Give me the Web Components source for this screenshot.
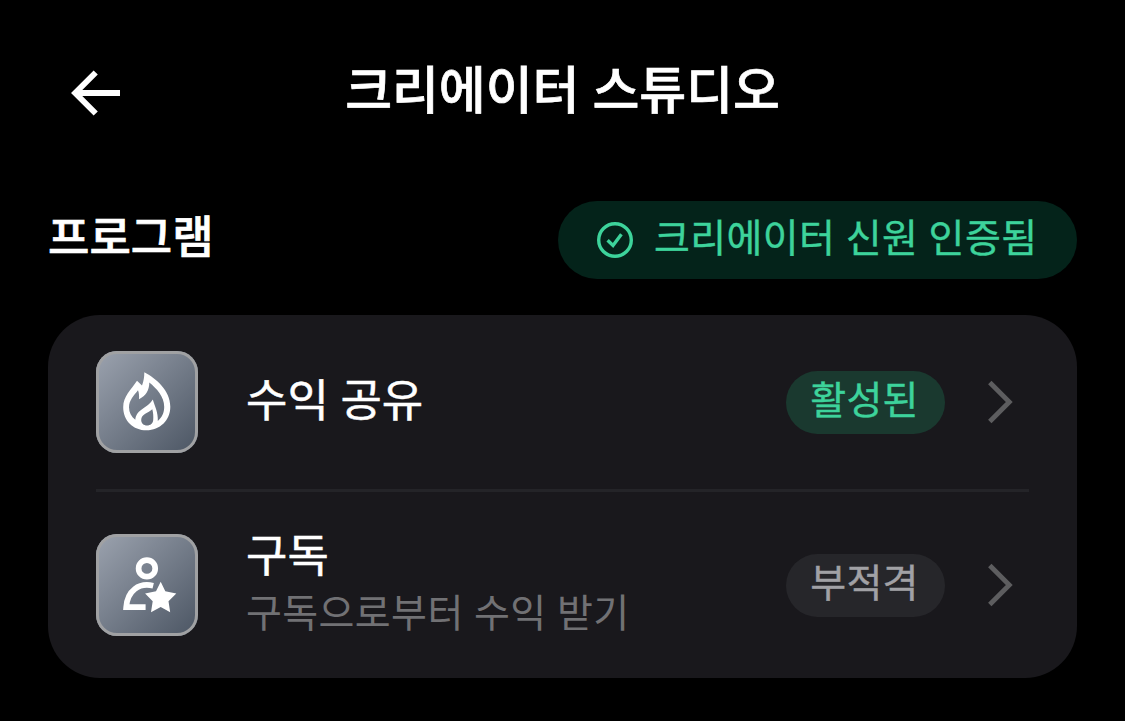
<!DOCTYPE html>
<html lang="ko">
<head>
<meta charset="utf-8">
<title>크리에이터 스튜디오</title>
<style>
	body {
		margin: 0;
		background: #000;
		color: #fff;
		font-family: "Noto Sans CJK KR", sans-serif;
	}
</style>
</head>
<body>
<studio-page>
	<page-header slot="header">크리에이터 스튜디오</page-header>
	<section-header slot="heading">
		프로그램
		<verified-badge slot="badge">크리에이터 신원 인증됨</verified-badge>
	</section-header>
	<program-card>
		<program-row>
			<program-icon slot="icon" name="flame"></program-icon>
			<span slot="name">수익 공유</span>
			<status-pill slot="status" active>활성된</status-pill>
		</program-row>
		<program-row class="tall">
			<program-icon slot="icon" name="subscriber"></program-icon>
			<span slot="name">구독</span>
			<span slot="detail">구독으로부터 수익 받기</span>
			<status-pill slot="status">부적격</status-pill>
		</program-row>
	</program-card>
</studio-page>

<script>
class BaseElement extends HTMLElement {
	constructor() {
		super();
		let template = document.createElement("template");
		template.innerHTML = this.markup();
		this.attachShadow({ mode: "open" });
		this.shadowRoot.appendChild(template.content.cloneNode(true));
	}
}

class StudioPage extends BaseElement {
	markup() {
		return `
			<style>
				:host {
					display: flex;
					flex-direction: column;
					box-sizing: border-box;
					height: 721px;
					padding: 0 48px;
					overflow: hidden;
				}
			</style>
			<slot name="header"></slot>
			<slot name="heading"></slot>
			<slot></slot>
		`;
	}
}

class PageHeader extends BaseElement {
	markup() {
		return `
			<style>
				:host {
					display: grid;
					grid-template-columns: 72px 1fr 72px;
					height: 201px;
				}
				svg {
					display: block;
					margin: 69px 0 0 22px;
				}
				h1 {
					margin: 52px 0 0;
					font-size: 51px;
					font-weight: 500;
					line-height: 70px;
					text-align: center;
					white-space: nowrap;
					letter-spacing: -.1px;
					word-spacing: -1px;
					-webkit-text-stroke: .7px;
				}
			</style>
			<svg width="52" height="48" fill="none" stroke="#fff" stroke-width="5.9">
				<path d="M25.7 3.5L5.2 24L25.7 44.5"/>
				<path d="M5 24H50"/>
			</svg>
			<h1><slot></slot></h1>
		`;
	}
}

class SectionHeader extends BaseElement {
	markup() {
		return `
			<style>
				:host {
					display: flex;
					justify-content: space-between;
					height: 114px;
				}
				h2 {
					margin: 0;
					font-size: 45px;
					font-weight: 500;
					line-height: 67px;
					-webkit-text-stroke: .7px;
				}
			</style>
			<h2><slot></slot></h2>
			<slot name="badge"></slot>
		`;
	}
}

class VerifiedBadge extends BaseElement {
	markup() {
		return `
			<style>
				:host {
					display: flex;
					box-sizing: border-box;
					width: 519px;
					height: 78px;
					padding-left: 39px;
					gap: 21px;
					border-radius: 39px;
					background: #04231a;
					color: #3dd39b;
					font-size: 39px;
					font-weight: 400;
					line-height: 69px;
					letter-spacing: .4px;
					word-spacing: -1px;
					white-space: nowrap;
				}
				svg {
					flex: none;
					margin-top: 21px;
				}
				span {
					-webkit-text-stroke: .4px;
				}
			</style>
			<svg width="36" height="36" fill="none" stroke="currentColor" stroke-width="3.4">
				<circle cx="18" cy="18" r="16.3"/>
				<path d="M10.6 18.3L16 23.4L24.4 12.2"/>
			</svg>
			<span><slot></slot></span>
		`;
	}
}

class ProgramCard extends BaseElement {
	markup() {
		return `
			<style>
				:host {
					display: block;
					box-sizing: border-box;
					height: 363px;
					padding: 0 48px;
					border-radius: 52px;
					background: #19181c;
				}
			</style>
			<slot></slot>
		`;
	}
}

class ProgramRow extends BaseElement {
	markup() {
		return `
			<style>
				:host {
					display: flex;
					align-items: center;
					height: 174px;
				}
				:host(.tall) {
					height: 186px;
					border-top: 3px solid #242428;
				}
				.text {
					display: flex;
					flex: 1;
					flex-direction: column;
					margin-left: 48px;
					padding-bottom: 9px;
					white-space: nowrap;
				}
				:host(.tall) .text {
					padding-bottom: 11px;
				}
				.name {
					display: block;
					font-size: 45px;
					font-weight: 400;
					line-height: 60px;
					word-spacing: -1px;
					-webkit-text-stroke: .5px;
				}
				.detail {
					display: block;
					color: #717174;
					font-size: 39px;
					line-height: 54px;
					letter-spacing: .4px;
					word-spacing: -1px;
				}
				svg {
					margin: 0 15px 0 41px;
				}
			</style>
			<slot name="icon"></slot>
			<div class="text">
				<slot class="name" name="name"></slot>
				<slot class="detail" name="detail"></slot>
			</div>
			<slot name="status"></slot>
			<svg width="28" height="44" fill="none" stroke="#5d5d5f" stroke-width="4.8">
				<path d="M3.8 2.5L23.3 22L3.8 41.5"/>
			</svg>
		`;
	}
}

class StatusPill extends BaseElement {
	markup() {
		return `
			<style>
				:host {
					box-sizing: border-box;
					width: 159px;
					height: 63px;
					padding-right: 2px;
					border-radius: 32px;
					background: #26262a;
					color: #a1a1a5;
					font-size: 39px;
					font-weight: 400;
					line-height: 52px;
					letter-spacing: .3px;
					text-align: center;
					-webkit-text-stroke: .4px;
				}
				:host([active]) {
					background: #1a392f;
					color: #3dd39b;
				}
			</style>
			<slot></slot>
		`;
	}
}

const ICONS = {
	flame: `
		<path fill="#fff" fill-rule="evenodd" d="
			M48.3 21.3C60 27.5 74.3 39.5 74.3 55.8C74.3 69.5 63.8 79.3 50.5 79.3
			C37 79.3 27.2 69.5 27.2 56.2C27.2 45.2 35 39 41 29.8L46 34.5C47.7 30.5 48.3 26 48.3 21.3Z
			M53.3 31.5C53.3 39 50 45 43 48.2C43.3 44.8 43 42 42 39.2C38 44.4 33 49.2 33 56.2
			C33 61.5 35.2 65.6 39.3 68.8C40.3 58 51.5 57.5 56.8 48.5C58.5 54.5 62.3 61.5 61.8 70
			C66 66.5 68.2 61.8 68.2 55.8C68.2 45.5 60.6 37.5 53.3 31.5Z
			M56.3 58.2C52.3 62 45.2 63 45.2 69C45.2 72.3 47.7 74.5 51 74.5
			C54.5 74.5 57 72.3 57.2 69C57.5 65.5 57.3 61.8 56.3 58.2Z"/>`,
	subscriber: `
		<g fill="none" stroke="#fff" stroke-width="5.7">
			<circle cx="50.9" cy="34.4" r="8.3"/>
			<path d="M57.2 51.7C43 48.3 31.4 56.5 30.2 73.1H49.6"/>
		</g>
		<path fill="#fff" d="M64.7 47.8L69.3 57.2L80.3 59.5L72.5 67.2L74.2 78.3L64.7 73L55 78.3L56.7 67.2L49.1 59.5L60 57.2Z"/>`
};

class ProgramIcon extends BaseElement {
	markup() {
		return `
			<style>
				:host {
					flex: none;
					width: 102px;
					height: 102px;
					border-radius: 21px;
					background: linear-gradient(135deg, #9ca3af, #4b5563);
					box-shadow: inset 0 0 0 3px #a0a1a3;
				}
				svg {
					display: block;
				}
			</style>
			<svg width="102" height="102"></svg>
		`;
	}

	connectedCallback() {
		this.shadowRoot.querySelector("svg").innerHTML = ICONS[this.getAttribute("name")];
	}
}

customElements.define("studio-page", StudioPage);
customElements.define("page-header", PageHeader);
customElements.define("section-header", SectionHeader);
customElements.define("verified-badge", VerifiedBadge);
customElements.define("program-card", ProgramCard);
customElements.define("program-row", ProgramRow);
customElements.define("status-pill", StatusPill);
customElements.define("program-icon", ProgramIcon);
</script>
</body>
</html>
